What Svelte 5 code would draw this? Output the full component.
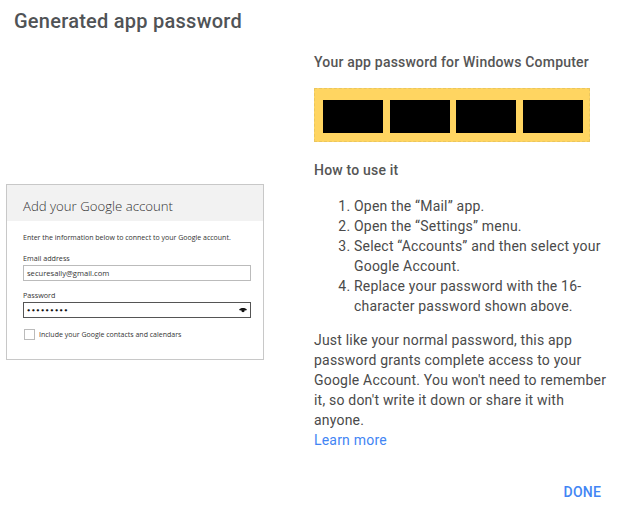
<script>
  const steps = [
    "Open the “Mail” app.",
    "Open the “Settings” menu.",
    "Select “Accounts” and then select your Google Account.",
    "Replace your password with the 16-character password shown above."
  ];
</script>

<div class="dialog">
  <h1>Generated app password</h1>
  <div class="content">
    <div class="left">
      <div class="shot">
        <div class="shot-head">Add your Google account</div>
        <div class="shot-body">
          <p class="intro">Enter the information below to connect to your Google account.</p>
          <div class="label">Email address</div>
          <div class="input">securesally@gmail.com</div>
          <div class="label second">Password</div>
          <div class="input dark">
            <span class="dots">●●●●●●●●●</span>
            <svg width="8" height="6" viewBox="0 0 9 6"><path d="M0 3 C1.5 0 7.5 0 9 3 L7.2 3.6 C6.5 2.6 2.5 2.6 1.8 3.6 Z" fill="#111"/><circle cx="4.5" cy="3.7" r="1.9" fill="#111"/></svg>
          </div>
          <div class="check"><span class="box"></span>Include your Google contacts and calendars</div>
        </div>
      </div>
    </div>
    <div class="right">
      <h2>Your app password for Windows Computer</h2>
      <div class="code">
        <div></div><div></div><div></div><div></div>
      </div>
      <h2 class="how">How to use it</h2>
      <ol>
        {#each steps as step}
          <li>{step}</li>
        {/each}
      </ol>
      <p class="note">Just like your normal password, this app password grants complete access to your Google Account. You won't need to remember it, so don't write it down or share it with anyone.</p>
      <a class="learn" href="#learn">Learn more</a>
    </div>
  </div>
  <div class="actions"><button>DONE</button></div>
</div>

<style>
:global(body) {
  margin: 0;
  background: #fff;
}
.dialog {
  width: 632px;
  height: 522px;
  box-sizing: border-box;
  padding: 9px 26px 0 14px;
  font-family: Roboto, "Liberation Sans", sans-serif;
  color: #4a4a4a;
  letter-spacing: 0.2px;
  overflow: hidden;
}
h1 {
  margin: 0;
  font-size: 20px;
  font-weight: 500;
  line-height: 24px;
  color: #505356;
  letter-spacing: 0.25px;
}
.content {
  display: flex;
  margin-top: 19px;
}
.left {
  width: 258px;
  margin-left: -8px;
  margin-right: 50px;
  flex: none;
  padding-top: 132px;
}
.shot {
  width: 256px;
  height: 174px;
  border: 1px solid #c8c8c8;
  color: #333;
  font-family: "Open Sans", sans-serif;
  letter-spacing: 0;
}
.shot-head {
  background: #f2f2f2;
  height: 36px;
  line-height: 43px;
  padding-left: 16px;
  font-size: 13.2px;
  color: #333;
  font-weight: 300;
}
.shot-body {
  padding: 12px 16px 0;
}
.intro {
  margin: 0 0 10px;
  font-size: 7px;
  line-height: 10px;
}
.label {
  font-size: 7.2px;
  line-height: 10px;
  margin-bottom: 2px;
}
.label.second {
  margin-top: 9px;
}
.input {
  box-sizing: border-box;
  height: 16px;
  width: 228px;
  border: 1px solid #bbb;
  font-size: 7.6px;
  line-height: 14px;
  padding: 0 3px;
  display: flex;
  justify-content: space-between;
  align-items: center;
}
.input.dark {
  border-color: #555;
}
.dots {
  font-size: 5.4px;
  letter-spacing: 1.4px;
  color: #111;
}
.check {
  display: flex;
  align-items: center;
  gap: 4px;
  margin-top: 11px;
  margin-left: 1px;
  font-size: 7px;
}
.box {
  width: 9px;
  height: 9px;
  border: 1px solid #bbb;
}
.right {
  width: 294px;
  flex: none;
}
h2 {
  margin: 0;
  font-size: 14px;
  font-weight: 500;
  line-height: 20px;
  color: #555;
}
.code {
  box-sizing: border-box;
  width: 276px;
  height: 54px;
  margin-top: 16px;
  background: #ffd561;
  border: 1px dashed #eac65f;
  padding: 11px 6px 8px 8px;
  display: flex;
  justify-content: space-between;
}
.code div {
  width: 60px;
  background: #000;
}
.how {
  margin-top: 18px;
}
ol {
  margin: 16px 0 0;
  padding-left: 40px;
  font-size: 14px;
  line-height: 20px;
}
.note {
  margin: 14px 0 0;
  font-size: 14px;
  line-height: 20px;
}
.learn {
  display: block;
  font-size: 14px;
  line-height: 20px;
  color: #4285f4;
  text-decoration: none;
}
.actions {
  display: flex;
  justify-content: flex-end;
  margin-top: 32px;
}
button {
  border: 0;
  background: none;
  padding: 0;
  margin-right: 5px;
  font: 500 14px/20px Roboto, sans-serif;
  color: #4285f4;
  letter-spacing: 0.2px;
}
</style>
